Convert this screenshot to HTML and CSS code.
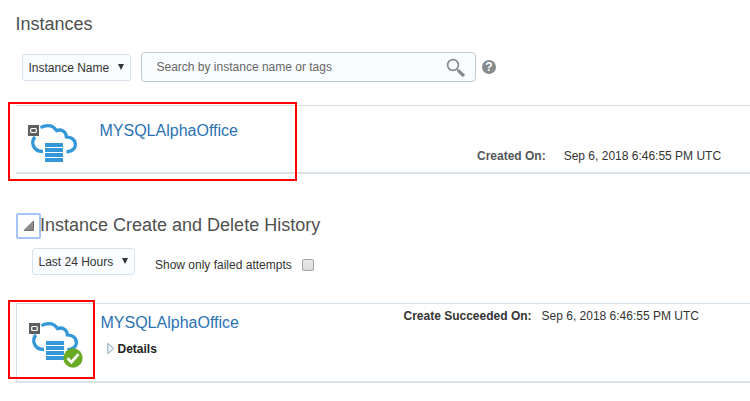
FILE: index.html
```html
<!DOCTYPE html>
<html lang="en">
<head>
<meta charset="utf-8">
<title>Instances</title>
<link rel="stylesheet" href="styles.css">
</head>
<body>
<svg class="defs" width="0" height="0">
  <symbol id="cloud" viewBox="0 0 52 46">
    <g fill="none" stroke="#3498d8" stroke-width="3.300">
      <path d="M12.500 5.600C15 4.200 17.500 3.600 20 3.600c4 0 6.700 2 8.600 5 4.700-1.800 9.600 1 9.800 6.200 5.200 0 9 3.400 9 8 0 3.600-2.900 6.200-8.900 7.200"/>
      <path d="M7 15C4.800 17.200 4.200 20.500 5.300 23.600c1.300 3.600 4.700 5.900 9.700 5.900"/>
    </g>
    <path fill="#3498d8" d="M17 21h18v4H17zM17 26h18v4H17zM17 31h18v4H17zM17 36h18v4H17z"/>
    <path fill="#5c5e60" d="M0 3h11v11H0z"/>
    <rect x="2.700" y="6.500" width="5.600" height="4" rx="1" fill="none" stroke="#fff" stroke-width="1.200"/>
  </symbol>
</svg>
<main>
  <h1>Instances</h1>
  <div class="filters">
    <div class="select">Instance Name<i></i></div>
    <div class="search"><span>Search by instance name or tags</span>
      <svg width="20" height="20" viewBox="0 0 20 20"><circle cx="7" cy="7" r="5.400" fill="none" stroke="#858a8c" stroke-width="1.700"/><path d="M10.500 10.800l2 2" stroke="#858a8c" stroke-width="1.600"/><path d="M12 12.300l6 5.700" stroke="#858a8c" stroke-width="3.200"/></svg>
    </div>
    <span class="help">?</span>
  </div>
  <section class="card instance">
    <svg class="cloud"><use href="#cloud"/></svg>
    <a class="name">MYSQLAlphaOffice</a>
    <div class="created"><b>Created On:</b><span>Sep 6, 2018 6:46:55 PM UTC</span></div>
    <div class="mark mark-instance"></div>
  </section>
  <div class="history-head">
    <span class="toggle"><svg width="12" height="12"><path d="M10.500 1v9.500H1z" fill="#8b8b8b" stroke="#707070"/></svg></span>
    <h2>Instance Create and Delete History</h2>
  </div>
  <div class="history-filters">
    <div class="select period">Last 24 Hours<i></i></div>
    <span class="failed">Show only failed attempts</span>
    <span class="checkbox"></span>
  </div>
  <section class="card history">
    <div class="icon">
      <svg class="cloud"><use href="#cloud"/></svg>
      <svg class="ok" width="20" height="20" viewBox="0 0 20 20"><circle cx="10" cy="10" r="9.700" fill="#6aaa22"/><path d="M4.500 10.300l3.800 3.900 7.200-8" fill="none" stroke="#fff" stroke-width="2.700"/></svg>
    </div>
    <div class="summary">
      <a class="name">MYSQLAlphaOffice</a>
      <div class="details"><svg width="8" height="13"><path d="M.8 1.300v10.400l6-5.200z" fill="#edf4f8" stroke="#8ba5b5"/></svg><b>Details</b></div>
    </div>
    <div class="succeeded"><b>Create Succeeded On:</b><span>Sep 6, 2018 6:46:55 PM UTC</span></div>
    <div class="mark mark-history"></div>
  </section>
</main>
</body>
</html>
```

FILE: styles.css
```css
* { box-sizing: border-box; }
body { margin: 0; background: #fff; color: #333; font: 12px/14px "Liberation Sans", Arial, sans-serif; overflow: hidden; }
.defs { display: block; }
main { padding: 13px 0 0 16px; height: 401px; }
h1, h2 { margin: 0; font-size: 18px; line-height: 22px; font-weight: normal; color: #4f4f4f; }
h1 { margin-left: -0.500px; }
.filters { display: flex; align-items: flex-start; margin-top: 17px; padding-left: 6px; height: 53px; }
.select { display: flex; align-items: center; justify-content: space-between; width: 109px; height: 27px; margin-top: 2px; padding: 0 6px 0 5.500px; border: 1px solid #d9e2ea; border-radius: 3px; background: #fafdff; white-space: nowrap; }
.select i { margin-top: -2px; border: solid transparent; border-width: 6px 3px 0; border-top-color: #333; }
.search { display: flex; align-items: center; justify-content: space-between; width: 335px; height: 30px; margin-left: 10px; padding: 0 9px 0 14.500px; border: 1px solid #bcc9d5; border-radius: 4px; background: #fafdff; color: #666; }
.search svg { margin-top: 2px; }
.help { width: 14px; height: 14px; margin: 8px 0 0 6px; border-radius: 50%; background: #858a8c; color: #fff; font-weight: bold; text-align: center; }
.card { position: relative; display: flex; border-top: 1px solid #d3dee7; border-bottom: 2px solid #dce3e8; }
.cloud { display: block; width: 52px; height: 46px; flex: none; }
.name { color: #2b72b4; font-size: 16px; line-height: 18px; }
.instance { height: 69px; }
.instance .cloud { margin: 16px 0 0 12px; }
.instance .name { margin: 16px 0 0 19.500px; width: 377.500px; }
.created { margin-top: 43px; white-space: nowrap; }
.created b { color: #555; }
.created span { margin-left: 18px; }
.mark { position: absolute; border: 2px solid #f00; }
.mark-instance { left: -8px; top: -4px; width: 289px; height: 79px; }
.history-head { display: flex; margin-top: 39px; height: 26px; }
.toggle { width: 25px; height: 26px; margin-left: -0.500px; padding: 5px 0 0 5px; border: 2px solid #a5c5f8; border-radius: 2px; }
.toggle svg { display: block; }
.history-head h2 { margin: 1px 0 0 -0.500px; }
.history-filters { display: flex; margin: 8px 0 0 16px; height: 56px; align-items: flex-start; }
.period { width: 103px; margin-top: 1px; }
.failed { margin: 11px 0 0 20px; }
.checkbox { width: 12px; height: 12px; margin: 12px 0 0 10px; border: 1px solid #a5a5a5; border-radius: 2px; background: linear-gradient(#e9e9e9, #dcdcdc); }
.history { height: 80px; border-left: 1px solid #d3dee7; }
.icon { position: relative; width: 83.500px; height: 60px; padding: 16px 0 0 12px; }
.ok { position: absolute; left: 46px; top: 44px; }
.summary { width: 303px; padding-top: 10px; }
.details { display: flex; margin: 10px 0 0 6px; color: #222; }
.details svg { margin: 0 3px 0 0; }
.succeeded { margin-top: 5px; white-space: nowrap; }
.succeeded span { margin-left: 10px; }
.mark-history { left: -9px; top: -4px; width: 87px; height: 79px; }
```
